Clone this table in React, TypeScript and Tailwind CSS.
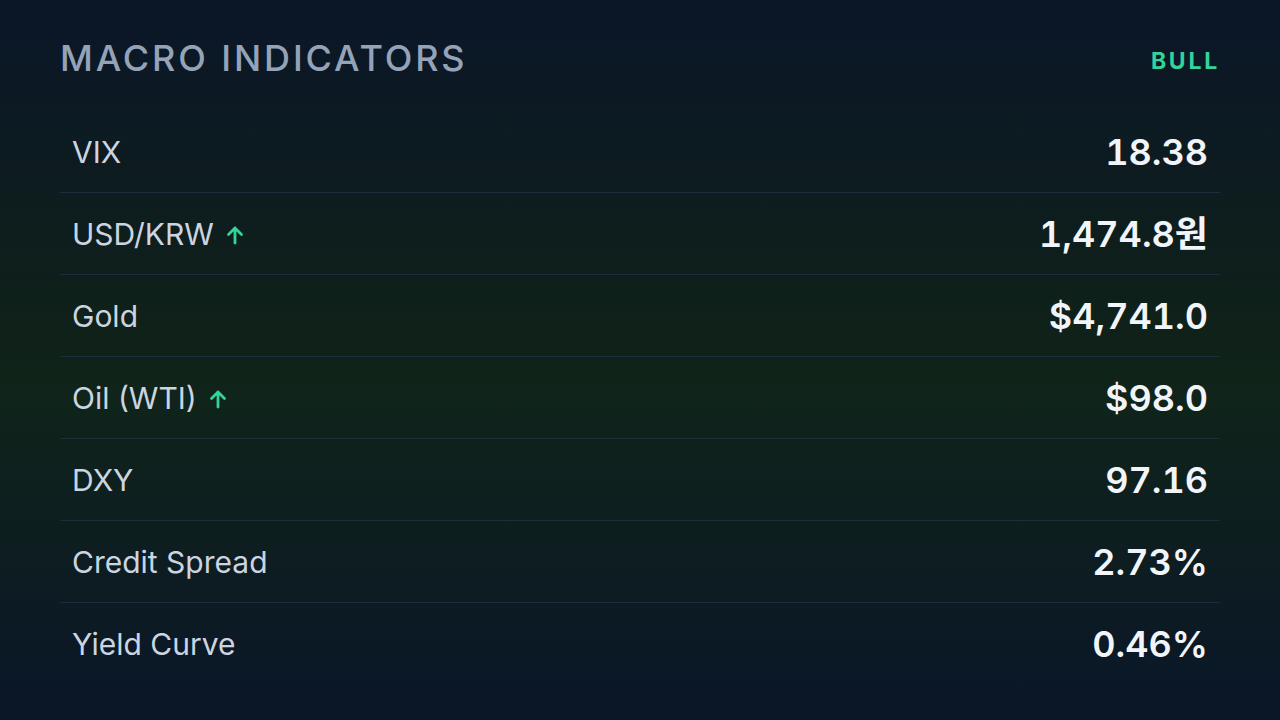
import React from "react";

type Row = { label: string; value: string; up?: boolean };

const rows: Row[] = [
  { label: "VIX", value: "18.38" },
  { label: "USD/KRW", value: "1,474.8원", up: true },
  { label: "Gold", value: "$4,741.0" },
  { label: "Oil (WTI)", value: "$98.0", up: true },
  { label: "DXY", value: "97.16" },
  { label: "Credit Spread", value: "2.73%" },
  { label: "Yield Curve", value: "0.46%" },
];

function Up() {
  return (
    <svg width="18" height="20" viewBox="0 0 18 20" className="ml-[12px] mt-[2px]">
      <path d="M9 18V3M2.5 9.5L9 3l6.5 6.5" stroke="#34d399" strokeWidth="2.8" fill="none" strokeLinecap="round" strokeLinejoin="round" />
    </svg>
  );
}

export default function App() {
  return (
    <div
      className="h-[720px] w-[1280px] bg-[linear-gradient(180deg,#0b1628_0%,#0f2119_45%,#0f241a_55%,#0b1628_100%)] px-[60px] pt-[36px]"
      style={{ fontFamily: "Inter, 'Noto Sans CJK KR', sans-serif" }}
    >
      <div className="flex items-end justify-between">
        <div className="text-[36px] font-medium leading-[44px] tracking-[0.08em] text-[#94a3b8]">MACRO INDICATORS</div>
        <div className="mb-[5px] text-[23px] font-bold leading-[28px] tracking-[0.12em] text-[#34d399]">BULL</div>
      </div>
      <div className="mt-[31px] flex flex-col">
        {rows.map((r, i) => (
          <div
            key={r.label}
            className={`flex h-[82px] items-center justify-between px-[12px] ${i < rows.length - 1 ? "border-b border-[#1e2d3b]" : ""}`}
          >
            <div className="flex items-center text-[30px] leading-none text-[#cbd5e1]">
              <span>{r.label}</span>
              {r.up && <Up />}
            </div>
            <div className="text-[36px] font-semibold leading-none tabular-nums text-[#f1f5f9]">{r.value}</div>
          </div>
        ))}
      </div>
    </div>
  );
}
